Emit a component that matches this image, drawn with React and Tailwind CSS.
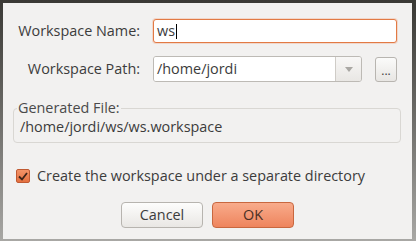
import React from 'react';

const font = { fontFamily: '"Open Sans", "DejaVu Sans", sans-serif' };

function Caret() {
  return <span className="inline-block w-px h-[15px] bg-black align-middle ml-px" />;
}

function CheckIcon() {
  return (
    <svg width="10" height="9" viewBox="0 0 10 9" className="block">
      <path d="M1 4.5 L4 7.5 L9 1" fill="none" stroke="#3d2418" strokeWidth="1.8" />
    </svg>
  );
}

export default function App() {
  return (
    <div
      className="w-[416px] h-[241px] pt-[3px] pl-[3px] pr-[4px] pb-[2px] bg-gradient-to-b from-[#3a3935] to-[#a9a8a5] text-[#3c3c3c] text-[14.4px]"
      style={font}
    >
      <div className="w-full h-full bg-[#f2f1f0] flex flex-col pl-[10px]">
        <div className="flex items-center mt-[16px] h-[24px]">
          <div className="w-[127px] text-right whitespace-nowrap">Workspace Name:</div>
          <div className="ml-[13px] w-[244px] h-[24px] flex items-center bg-white border border-[#e27a44] rounded-[3px] pl-[3px] shadow-[0_0_0_1px_rgba(240,140,90,0.25)]">
            <span>ws</span>
            <Caret />
          </div>
        </div>

        <div className="flex items-center mt-[13px] h-[26px]">
          <div className="w-[127px] text-right whitespace-nowrap">Workspace Path:</div>
          <div className="ml-[13px] w-[209px] h-[26px] flex border border-[#bdbab5] rounded-[3px] overflow-hidden">
            <div className="flex-1 bg-white flex items-center pl-[3px] border-r border-[#cfccc7]">/home/jordi</div>
            <div className="w-[25px] bg-gradient-to-b from-[#f8f7f6] to-[#e9e7e4] flex items-center justify-center">
              <span className="w-0 h-0 border-l-[4px] border-r-[4px] border-t-[5px] border-l-transparent border-r-transparent border-t-[#a9a7a3]" />
            </div>
          </div>
          <div className="ml-[13px] w-[22px] h-[25px] border border-[#b8b5b0] rounded-[3px] bg-gradient-to-b from-[#fbfbfa] to-[#e8e6e3] flex items-center justify-center text-[12px] leading-none pt-[3px]">
            ...
          </div>
        </div>

        <div className="relative mt-[26px] w-[388px] h-[35px] border border-[#d9d7d3] rounded-[4px] flex items-end pb-[6px] pl-[6px]">
          <div className="absolute -top-[10px] left-[3px] bg-[#f2f1f0] pr-[1px] pl-[1px] leading-[18px] text-[#4a4a4a] whitespace-nowrap">
            Generated File:
          </div>
          <div className="leading-[18px]">/home/jordi/ws/ws.workspace</div>
        </div>

        <div className="flex items-center mt-[24px] pl-[3px]">
          <div className="w-[14px] h-[14px] rounded-[2px] border border-[#c05a32] bg-gradient-to-b from-[#f39367] to-[#e4703f] flex items-center justify-center">
            <CheckIcon />
          </div>
          <div className="ml-[7px] leading-[18px] whitespace-nowrap">Create the workspace under a separate directory</div>
        </div>

        <div className="flex mt-[17px] pl-[108px] gap-[9px]">
          <div className="w-[82px] h-[26px] border border-[#b7b4af] rounded-[4px] bg-gradient-to-b from-[#fdfdfc] to-[#e9e7e4] flex items-center justify-center">
            Cancel
          </div>
          <div className="w-[82px] h-[26px] border border-[#c8673f] rounded-[4px] bg-gradient-to-b from-[#f8ab8b] to-[#ee845d] flex items-center justify-center text-[#4a2f24]">
            OK
          </div>
        </div>
      </div>
    </div>
  );
}
